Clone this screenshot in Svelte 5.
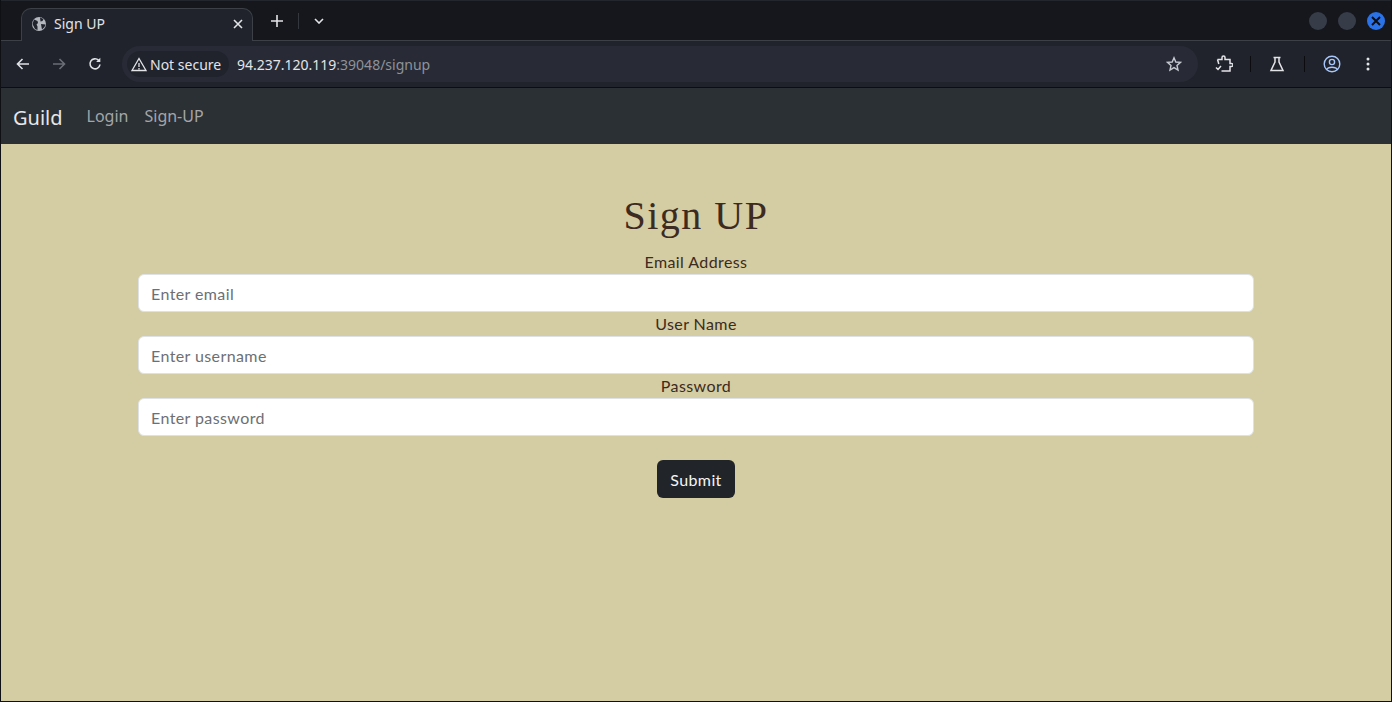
<script>
  const fields = [
    { label: 'Email Address', placeholder: 'Enter email', type: 'email' },
    { label: 'User Name', placeholder: 'Enter username', type: 'text' },
    { label: 'Password', placeholder: 'Enter password', type: 'password' }
  ];
</script>

<div class="window">
  <div class="tabstrip">
    <div class="tab">
      <svg class="globe" width="16" height="16" viewBox="0 0 16 16"><circle cx="8" cy="8" r="7" fill="#b4b7bd"/><path d="M3 3.5 6.5 5 7 7 5.500 8.500 6.500 10.500 6.500 14 4 13 1.500 8ZM9 1.500 12.500 3 11.500 5 9.500 5.500ZM10 8 14.500 8.500 13.500 11 11 13.500 10.500 11Z" fill="#20232c"/></svg>
      <span class="tab-title">Sign UP</span>
      <svg class="tab-close" width="10" height="10" viewBox="0 0 10 10"><path d="M1 1 9 9M9 1 1 9" stroke="#e3e4e8" stroke-width="1.600"/></svg>
    </div>
    <svg class="newtab" width="12" height="12" viewBox="0 0 12 12"><path d="M6 0V12M0 6H12" stroke="#e3e4e8" stroke-width="1.600"/></svg>
    <span class="tabsep"></span>
    <svg class="tabsearch" width="10" height="6" viewBox="0 0 10 6"><path d="M1 1 5 5 9 1" fill="none" stroke="#e3e4e8" stroke-width="1.600"/></svg>
    <div class="winbtns">
      <span class="winbtn"></span>
      <span class="winbtn"></span>
      <span class="winbtn close"><svg width="10" height="10" viewBox="0 0 10 10"><path d="M1 1 9 9M9 1 1 9" stroke="#0b0d12" stroke-width="2"/></svg></span>
    </div>
  </div>

  <div class="toolbar">
    <svg class="tool back" width="16" height="16" viewBox="0 0 16 16"><path d="M14 8H3M7.500 3 2.500 8l5 5" fill="none" stroke="#dfe1e5" stroke-width="1.600"/></svg>
    <svg class="tool fwd" width="16" height="16" viewBox="0 0 16 16"><path d="M2 8H13M8.500 3l5 5-5 5" fill="none" stroke="#6b6e76" stroke-width="1.600"/></svg>
    <svg class="tool reload" width="16" height="16" viewBox="0 0 16 16"><path d="M13 8.500A5 5 0 1 1 11.500 4.200" fill="none" stroke="#dfe1e5" stroke-width="1.600"/><path d="M13.300 1.800V6H9.100Z" fill="#dfe1e5"/></svg>
    <div class="omnibox">
      <div class="chip">
        <svg width="16" height="15" viewBox="0 0 16 15"><path d="M8 1.500 15 13.500H1ZM8 6V10M8 11V12.500" fill="none" stroke="#e3e4e8" stroke-width="1.300"/></svg>
        <span>Not secure</span>
      </div>
      <span class="url">94.237.120.119<span class="dim">:39048/signup</span></span>
      <svg class="star" width="16" height="16" viewBox="0 0 16 16"><path d="M8 1.800 9.800 6 14.500 6.400 11 9.400 12 14 8 11.600 4 14 5 9.400 1.500 6.400 6.200 6Z" fill="none" stroke="#c8cad0" stroke-width="1.400"/></svg>
    </div>
    <svg class="ext" width="18" height="18" viewBox="0 0 18 18"><path d="M2.500 4.500H7V2.500a1.500 1.500 0 0 1 3 0V4.500h5V8.500h1.500a1.500 1.500 0 0 1 0 3H15V16H6.500M1 12.500 3 14.500 6 11M2.500 4.500 3.800 9" fill="none" stroke="#e3e4e8" stroke-width="1.500"/></svg>
    <span class="toolsep"></span>
    <svg class="flask" width="16" height="16" viewBox="0 0 16 16"><path d="M4.500 1.500H11.500M6 1.500V6L2 14.500H14L10 6V1.500" fill="none" stroke="#e3e4e8" stroke-width="1.500"/></svg>
    <span class="toolsep second"></span>
    <svg class="avatar" width="18" height="18" viewBox="0 0 18 18"><circle cx="9" cy="9" r="7.800" fill="none" stroke="#a8c7fa" stroke-width="1.400"/><circle cx="9" cy="7" r="2.600" fill="none" stroke="#a8c7fa" stroke-width="1.400"/><path d="M3.800 14.500C5 11.500 13 11.500 14.200 14.500" fill="none" stroke="#a8c7fa" stroke-width="1.400"/></svg>
    <svg class="menu" width="4" height="14" viewBox="0 0 4 14"><circle cx="2" cy="2" r="1.500" fill="#e3e4e8"/><circle cx="2" cy="7" r="1.500" fill="#e3e4e8"/><circle cx="2" cy="12" r="1.500" fill="#e3e4e8"/></svg>
  </div>

  <nav class="navbar">
    <a class="brand" href="#guild">Guild</a>
    <a class="link" href="#login">Login</a>
    <a class="link" href="#signup">Sign-UP</a>
  </nav>

  <main class="content">
    <h1>Sign UP</h1>
    <form onsubmit={(e) => e.preventDefault()}>
      {#each fields as f}
        <label>
          <span class="label-text">{f.label}</span>
          <input type={f.type} placeholder={f.placeholder} />
        </label>
      {/each}
      <button type="submit">Submit</button>
    </form>
  </main>
</div>

<style>
  :global(body) { margin: 0; background: #d4cca2; }
  .window {
    width: 1392px; height: 702px; box-sizing: border-box;
    display: flex; flex-direction: column;
    border-left: 1px solid #0e1014; border-right: 1px solid #0e1014; border-bottom: 1px solid #0e1014;
    overflow: hidden;
    font-family: "Noto Sans", sans-serif;
  }
  .tabstrip {
    height: 41px; flex: none; display: flex; align-items: center; box-sizing: border-box;
    background: #15171d; padding: 9px 0 0 20px; position: relative;
    border-top: 1px solid #23262d;
    border-bottom: 1px solid #3d4047;
  }
  .tab {
    width: 232px; height: 33px; box-sizing: border-box; margin-bottom: -1px; margin-top: -2px;
    background: #20232c; border: 1px solid #3d4047; border-bottom: none;
    border-radius: 10px 10px 0 0;
    display: flex; align-items: center; padding: 0 9px 3px 9px; color: #e3e4e8;
  }
  .globe { flex: none; }
  .tab-title { margin-left: 7px; font-size: 14px; flex: 1; }
  .tab-close { flex: none; }
  .newtab { margin-left: 18px; margin-top: -8px; }
  .tabsep { width: 1px; height: 16px; background: #34373e; margin-left: 15px; margin-top: -8px; }
  .tabsearch { margin-left: 15px; margin-top: -8px; }
  .winbtns { margin-left: auto; margin-right: 6px; margin-top: -8px; display: flex; gap: 11px; }
  .winbtn { width: 18px; height: 18px; border-radius: 50%; background: #373c49; display: flex; align-items: center; justify-content: center; }
  .winbtn.close { background: #2a72e8; }

  .toolbar {
    height: 47px; flex: none; box-sizing: border-box; display: flex; align-items: center;
    background: #20232c; padding: 0 14px 0 14px; border-bottom: 1px solid #0c0d10;
  }
  .tool { flex: none; }
  .fwd { margin-left: 20px; }
  .reload { margin-left: 20px; }
  .omnibox {
    margin-left: 19px; width: 1076px; height: 36px; box-sizing: border-box; flex: none;
    background: #282b36; border-radius: 18px; display: flex; align-items: center; padding: 0 16px 0 5px;
  }
  .chip {
    height: 26px; box-sizing: border-box; padding: 0 7px 0 4px; border-radius: 13px; background: #20232c;
    display: flex; align-items: center; gap: 3px; font-size: 14px; color: #e3e4e8; flex: none; width: 102px;
  }
  .url { margin-left: 8px; font-size: 14px; color: #e3e4e8; flex: 1; }
  .dim { color: #8f9299; }
  .star { flex: none; }
  .ext { margin-left: 17px; flex: none; }
  .toolsep { width: 1px; height: 16px; background: #0b0c0f; margin-left: 17px; flex: none; }
  .flask { margin-left: 18px; flex: none; }
  .toolsep.second { margin-left: 19px; }
  .avatar { margin-left: 18px; flex: none; }
  .menu { margin-left: 25px; flex: none; }

  .navbar {
    height: 56px; flex: none; box-sizing: border-box; background: #2b3035;
    display: flex; align-items: center; padding: 0 0 0 12px;
  }
  a { text-decoration: none; }
  .brand { font-size: 20px; color: #e6e7e8; margin-right: 16px; margin-top: 2px; }
  .link { font-size: 16px; color: #a4a6a9; padding: 0 8px; }

  .content {
    flex: 1; background: #d4cca2; display: flex; flex-direction: column; align-items: center;
    padding-top: 48px; font-family: Lato, "Noto Sans", sans-serif; color: #3d2a20;
  }
  h1 {
    margin: 0 0 10px; font-size: 40px; line-height: 48px; font-weight: 500; letter-spacing: 1.500px;
    font-family: "Liberation Serif", serif; text-align: center;
  }
  form { width: 1116px; display: flex; flex-direction: column; align-items: center; }
  label { display: block; width: 100%; text-align: center; }
  .label-text { display: block; font-size: 16px; line-height: 24px; letter-spacing: 0.400px; height: 24px; margin-top: -1px; padding-top: 1px; box-sizing: content-box; }
  input {
    display: block; width: 100%; height: 38px; box-sizing: border-box; padding: 6px 12px;
    border: 1px solid #dee2e6; border-radius: 6px; background: #fff; font-family: inherit; font-size: 16px; letter-spacing: 0.400px;
  }
  input::placeholder { color: #6c6f74; opacity: 1; }
  button {
    margin-top: 24px; width: 78px; height: 38px; border: none; border-radius: 6px;
    background: #212529; color: #f4f4f4; font-family: inherit; font-size: 16px; letter-spacing: 0.400px;
  }
</style>
